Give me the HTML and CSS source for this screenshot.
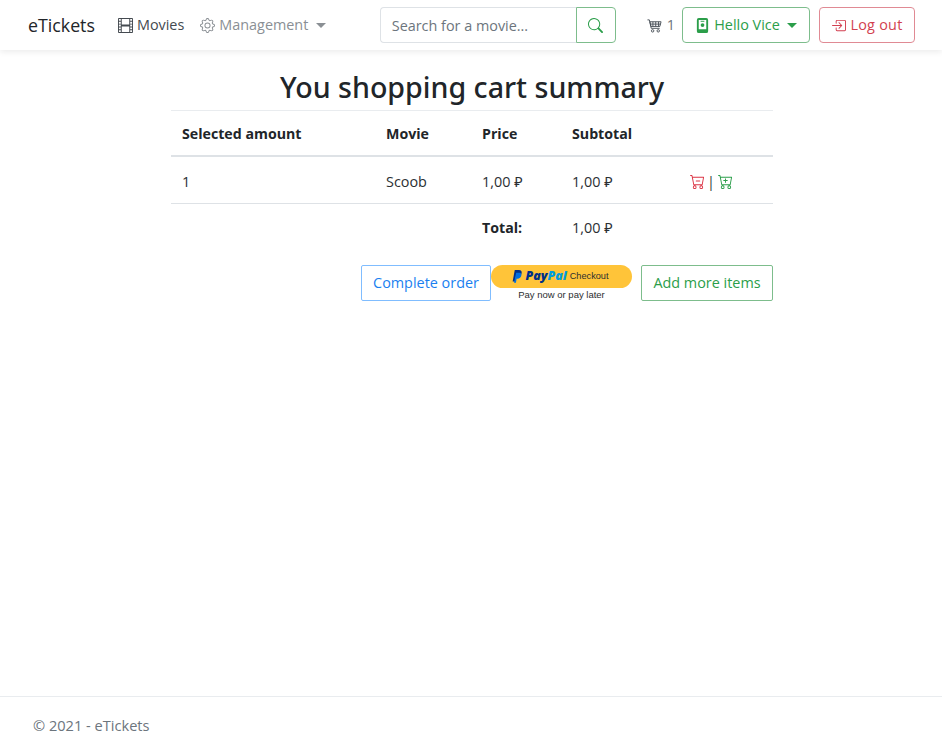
FILE: index.html
```html
<!DOCTYPE html>
<html lang="en">
<head>
<meta charset="utf-8">
<title>eTickets</title>
<link rel="stylesheet" href="styles.css">
</head>
<body>
<header class="navbar">
  <a class="brand">eTickets</a>
  <a class="nav-link movies">
    <svg class="ico" viewBox="0 0 16 16" fill="currentColor"><path d="M0 1a1 1 0 0 1 1-1h14a1 1 0 0 1 1 1v14a1 1 0 0 1-1 1H1a1 1 0 0 1-1-1V1zm4 0v6h8V1H4zm8 8H4v6h8V9zM1 1v2h2V1H1zm2 3H1v2h2V4zM1 7v2h2V7H1zm2 3H1v2h2v-2zm-2 3v2h2v-2H1zM15 1h-2v2h2V1zm-2 3v2h2V4h-2zm2 3h-2v2h2V7zm-2 3v2h2v-2h-2zm2 3h-2v2h2v-2z"/></svg>
    <span>Movies</span>
  </a>
  <a class="nav-link management">
    <svg class="ico" viewBox="0 0 16 16" fill="currentColor"><path d="M8 4.754a3.246 3.246 0 1 0 0 6.492 3.246 3.246 0 0 0 0-6.492zM5.754 8a2.246 2.246 0 1 1 4.492 0 2.246 2.246 0 0 1-4.492 0z"/><path d="M9.796 1.343c-.527-1.790-3.065-1.790-3.592 0l-.094.319a.873.873 0 0 1-1.255.52l-.292-.16c-1.640-.892-3.433.902-2.540 2.541l.159.292a.873.873 0 0 1-.52 1.255l-.319.094c-1.790.527-1.790 3.065 0 3.592l.319.094a.873.873 0 0 1 .52 1.255l-.16.292c-.892 1.640.901 3.434 2.541 2.540l.292-.159a.873.873 0 0 1 1.255.52l.094.319c.527 1.790 3.065 1.790 3.592 0l.094-.319a.873.873 0 0 1 1.255-.52l.292.16c1.640.893 3.434-.902 2.540-2.541l-.159-.292a.873.873 0 0 1 .52-1.255l.319-.094c1.790-.527 1.790-3.065 0-3.592l-.319-.094a.873.873 0 0 1-.52-1.255l.16-.292c.893-1.640-.902-3.433-2.541-2.540l-.292.159a.873.873 0 0 1-1.255-.52l-.094-.319zm-2.633.283c.246-.835 1.428-.835 1.674 0l.094.319a1.873 1.873 0 0 0 2.693 1.115l.291-.16c.764-.415 1.600.42 1.184 1.185l-.159.292a1.873 1.873 0 0 0 1.116 2.692l.318.094c.835.246.835 1.428 0 1.674l-.319.094a1.873 1.873 0 0 0-1.115 2.693l.16.291c.415.764-.42 1.600-1.185 1.184l-.291-.159a1.873 1.873 0 0 0-2.693 1.116l-.094.318c-.246.835-1.428.835-1.674 0l-.094-.319a1.873 1.873 0 0 0-2.692-1.115l-.292.16c-.764.415-1.600-.42-1.184-1.185l.159-.291A1.873 1.873 0 0 0 1.945 8.930l-.319-.094c-.835-.246-.835-1.428 0-1.674l.319-.094A1.873 1.873 0 0 0 3.060 4.377l-.16-.292c-.415-.764.42-1.600 1.185-1.184l.292.159a1.873 1.873 0 0 0 2.692-1.115l.094-.319z"/></svg>
    <span>Management</span><span class="caret"></span>
  </a>
  <form class="search">
    <input class="search-input" type="text" placeholder="Search for a movie...">
    <button class="btn btn-green search-btn" type="button">
      <svg class="ico" viewBox="0 0 16 16" fill="currentColor"><path d="M11.742 10.344a6.500 6.500 0 1 0-1.397 1.398h-.001c.03.04.062.078.098.115l3.850 3.850a1 1 0 0 0 1.415-1.414l-3.850-3.850a1.007 1.007 0 0 0-.115-.1zM12 6.500a5.500 5.500 0 1 1-11 0 5.500 5.500 0 0 1 11 0z"/></svg>
    </button>
  </form>
  <a class="cart-link">
    <svg class="ico" viewBox="0 0 16 16" fill="none" stroke="currentColor" stroke-width="1"><path d="M.5 2h2l2 9h9"/><path d="M3 4h12l-1.300 5H4.200zM6.300 4v5M9.300 4v5M12.300 4v5M3.500 6.500h11"/><circle cx="6" cy="13.700" r="1.300"/><circle cx="12" cy="13.700" r="1.300"/></svg>
    <span>1</span>
  </a>
  <a class="btn btn-green hello">
    <svg class="ico" viewBox="0 0 16 16" fill="currentColor"><path fill-rule="evenodd" d="M12 0H4a2 2 0 0 0-2 2v12a2 2 0 0 0 2 2h8a2 2 0 0 0 2-2V2a2 2 0 0 0-2-2zM4 2h8v10H4V2z"/><rect x="6" y="3" width="4" height="1"/><circle cx="8" cy="7.500" r="2"/></svg>
    <span>Hello Vice</span><span class="caret"></span>
  </a>
  <a class="btn btn-red logout">
    <svg class="ico" viewBox="0 0 16 16" fill="currentColor"><path fill-rule="evenodd" d="M6 3.500a.5.5 0 0 1 .5-.5h8a.5.5 0 0 1 .5.5v9a.5.5 0 0 1-.5.5h-8a.5.5 0 0 1-.5-.5v-2a.5.5 0 0 0-1 0v2A1.500 1.500 0 0 0 6.500 14h8a1.500 1.500 0 0 0 1.500-1.500v-9A1.500 1.500 0 0 0 14.500 2h-8A1.500 1.500 0 0 0 5 3.500v2a.5.5 0 0 0 1 0v-2z"/><path fill-rule="evenodd" d="M11.854 8.354a.5.5 0 0 0 0-.708l-3-3a.5.5 0 1 0-.708.708L10.293 7.500H1.500a.5.5 0 0 0 0 1h8.793l-2.147 2.146a.5.5 0 0 0 .708.708l3-3z"/></svg>
    <span>Log out</span>
  </a>
</header>

<main class="content">
  <h2 class="title">You shopping cart summary</h2>
  <table class="cart">
    <thead>
      <tr><th class="c1">Selected amount</th><th class="c2">Movie</th><th class="c3">Price</th><th class="c4">Subtotal</th><th class="c5"></th></tr>
    </thead>
    <tbody>
      <tr>
        <td>1</td><td>Scoob</td><td>1,00 ₽</td><td>1,00 ₽</td>
        <td class="actions">
          <div class="actions-inner">
            <svg class="ico red" viewBox="0 0 16 16" fill="currentColor"><path d="M6.500 7a.5.5 0 0 0 0 1h4a.5.5 0 0 0 0-1h-4z"/><path d="M.5 1a.5.5 0 0 0 0 1h1.110l.401 1.607 1.498 7.985A.5.5 0 0 0 4 12h1a2 2 0 1 0 0 4 2 2 0 0 0 0-4h7a2 2 0 1 0 0 4 2 2 0 0 0 0-4h1a.5.5 0 0 0 .491-.408l1.500-8A.5.5 0 0 0 14.500 3H2.890l-.405-1.621A.5.5 0 0 0 2 1H.5zm3.915 10L3.102 4h10.796l-1.313 7h-8.170zM6 14a1 1 0 1 1-2 0 1 1 0 0 1 2 0zm7 0a1 1 0 1 1-2 0 1 1 0 0 1 2 0z"/></svg>
            <span class="sep">|</span>
            <svg class="ico green" viewBox="0 0 16 16" fill="currentColor"><path d="M8.500 5a.5.5 0 0 0-1 0v1.500H6a.5.5 0 0 0 0 1h1.500V9a.5.5 0 0 0 1 0V7.500H10a.5.5 0 0 0 0-1H8.500V5z"/><path d="M.5 1a.5.5 0 0 0 0 1h1.110l.401 1.607 1.498 7.985A.5.5 0 0 0 4 12h1a2 2 0 1 0 0 4 2 2 0 0 0 0-4h7a2 2 0 1 0 0 4 2 2 0 0 0 0-4h1a.5.5 0 0 0 .491-.408l1.500-8A.5.5 0 0 0 14.500 3H2.890l-.405-1.621A.5.5 0 0 0 2 1H.5zm3.915 10L3.102 4h10.796l-1.313 7h-8.170zM6 14a1 1 0 1 1-2 0 1 1 0 0 1 2 0zm7 0a1 1 0 1 1-2 0 1 1 0 0 1 2 0z"/></svg>
          </div>
        </td>
      </tr>
    </tbody>
    <tfoot>
      <tr><td></td><td></td><td class="strong">Total:</td><td>1,00 ₽</td><td></td></tr>
    </tfoot>
  </table>
  <div class="actions-row">
    <a class="btn btn-blue">Complete order</a>
    <div class="paypal">
      <div class="pp-pill">
        <svg class="pp-mark" viewBox="0 0 12 14"><path fill="#003087" d="M3 0h4.500c2.500 0 3.500 1.400 3 3.500C10 6 8.400 7.300 6 7.300H4.300L3.400 12.500H.7z"/><path fill="#0070e0" d="M4.500 3h3.700c1.500.2 2.300 1.200 2 2.900-.4 2.200-2 3.500-4.200 3.500H5l-.7 4.300H2.200z"/></svg>
        <span class="pp-logo"><span class="pp-a">Pay</span><span class="pp-b">Pal</span></span>
        <span class="pp-checkout">Checkout</span>
      </div>
      <div class="pp-tag">Pay now or pay later</div>
    </div>
    <a class="btn btn-green add-more">Add more items</a>
  </div>
</main>

<footer class="footer">© 2021 - eTickets</footer>
</body>
</html>
```
FILE: styles.css
```css
* { box-sizing: border-box; }
html, body { height: 100%; }
body {
  margin: 0;
  min-height: 748px;
  display: flex;
  flex-direction: column;
  font-family: "Open Sans", "Noto Sans", sans-serif;
  font-size: 14.4px;
  line-height: 24px;
  color: #2b2f33;
  background: #fff;
}
.ico { width: 15px; height: 15px; flex: none; display: block; }
.caret {
  display: inline-block;
  width: 0; height: 0;
  border-top: 5px solid currentColor;
  border-left: 5px solid transparent;
  border-right: 5px solid transparent;
}
.navbar {
  height: 50px;
  display: flex;
  align-items: center;
  padding: 0 27px 0 28px;
  background: #fff;
  box-shadow: 0 2px 6px rgba(0,0,0,.08);
  white-space: nowrap;
}
.brand { font-size: 17.8px; color: #212529; margin-right: 23px; }
.nav-link { display: flex; align-items: center; gap: 4px; }
.movies { color: #444a50; margin-right: 16px; }
.management { color: #8a8f94; }
.management .caret { margin-left: 4px; }
.search { display: flex; margin-left: auto; }
.search-input {
  width: 196px; height: 36px;
  padding: 0 11px;
  border: 1px solid #dee2e6;
  border-right: 0;
  border-radius: 4px 0 0 4px;
  font: inherit;
  color: #495057;
  outline: 0;
}
.search-input::placeholder { color: #6c757d; opacity: 1; }
.btn {
  display: inline-flex;
  align-items: center;
  justify-content: center;
  white-space: nowrap;
  background: #fff;
  border: 1px solid;
  border-radius: 4px;
  font: inherit;
  height: 36px;
}
.btn-green { color: #2b9e4a; border-color: #7dbd8c; }
.btn-red { color: #d23f50; border-color: #e08a94; }
.btn-blue { color: #1a7ff0; border-color: #80bdff; }
.search-btn { width: 40px; padding: 0; border-radius: 0 4px 4px 0; }
.cart-link { display: flex; align-items: center; gap: 5px; margin-left: 31px; color: #6c757d; }
.cart-link .ico { color: #495057; }
.hello { width: 128px; gap: 4px; margin-left: 7px; }
.hello .caret { margin-left: 3px; }
.logout { width: 96px; gap: 4px; margin-left: 9px; letter-spacing: .25px; }
.content { width: 602px; margin-left: 171px; flex: 1; padding-top: 17px; }
.title { margin: 0; font-family: "Noto Sans", sans-serif; font-size: 28.6px; line-height: 40px; font-weight: 500; text-align: center; height: 43px; color: #212529; }
.cart { width: 100%; border-collapse: collapse; table-layout: fixed; }
.cart th, .cart td { padding: 2px 11px 0; text-align: left; height: 47px; }
.cart th { font-size: 14.2px; font-weight: 700; color: #212529; border-top: 1px solid #e9ecef; border-bottom: 2px solid #dee2e6; height: 45px; padding-top: 2px; }
.cart tbody td { border-bottom: 1px solid #dee2e6; height: 48px; padding-top: 4px; }
.c1 { width: 204px; }
.c2 { width: 96px; }
.c3 { width: 90px; }
.c4 { width: 109px; }
.cart .strong { font-weight: 700; font-size: 14.2px; color: #212529; }
.cart .actions { padding-left: 20px; }
.actions-inner { display: flex; align-items: center; gap: 1px; }
.red { color: #dc3545; }
.green { color: #2b9e4a; }
.sep { color: #343a40; margin-left: 1px; margin-right: 2px; }
.actions-row { display: flex; justify-content: flex-end; margin-top: 14px; }
.btn-blue { width: 130px; border-radius: 2px; padding-top: 1px; }
.add-more { width: 132px; margin-left: 9px; border-radius: 2px; padding-top: 1px; }
.paypal { width: 141px; display: flex; flex-direction: column; align-items: center; }
.pp-pill {
  width: 100%; height: 23px;
  background: #ffc439;
  border-radius: 12px;
  display: flex;
  align-items: center;
  justify-content: center;
  padding-right: 2px;
}
.pp-mark { width: 11px; height: 13px; margin-right: 2px; }
.pp-logo { font-family: "Open Sans", sans-serif; font-weight: 800; font-style: italic; font-size: 12.4px; line-height: 14px; }
.pp-a { color: #003087; }
.pp-b { color: #009cde; }
.pp-checkout { font-family: "Liberation Sans", sans-serif; font-size: 9.2px; line-height: 14px; color: #2c2e2f; margin-left: 3px; }
.pp-tag { font-family: "Liberation Sans", sans-serif; font-size: 9.5px; line-height: 13px; color: #2c2e2f; }
.footer {
  height: 52px;
  padding: 16px 0 0 33px;
  border-top: 1px solid #e9ecef;
  color: #6c757d;
  font-size: 14.6px;
}
```
